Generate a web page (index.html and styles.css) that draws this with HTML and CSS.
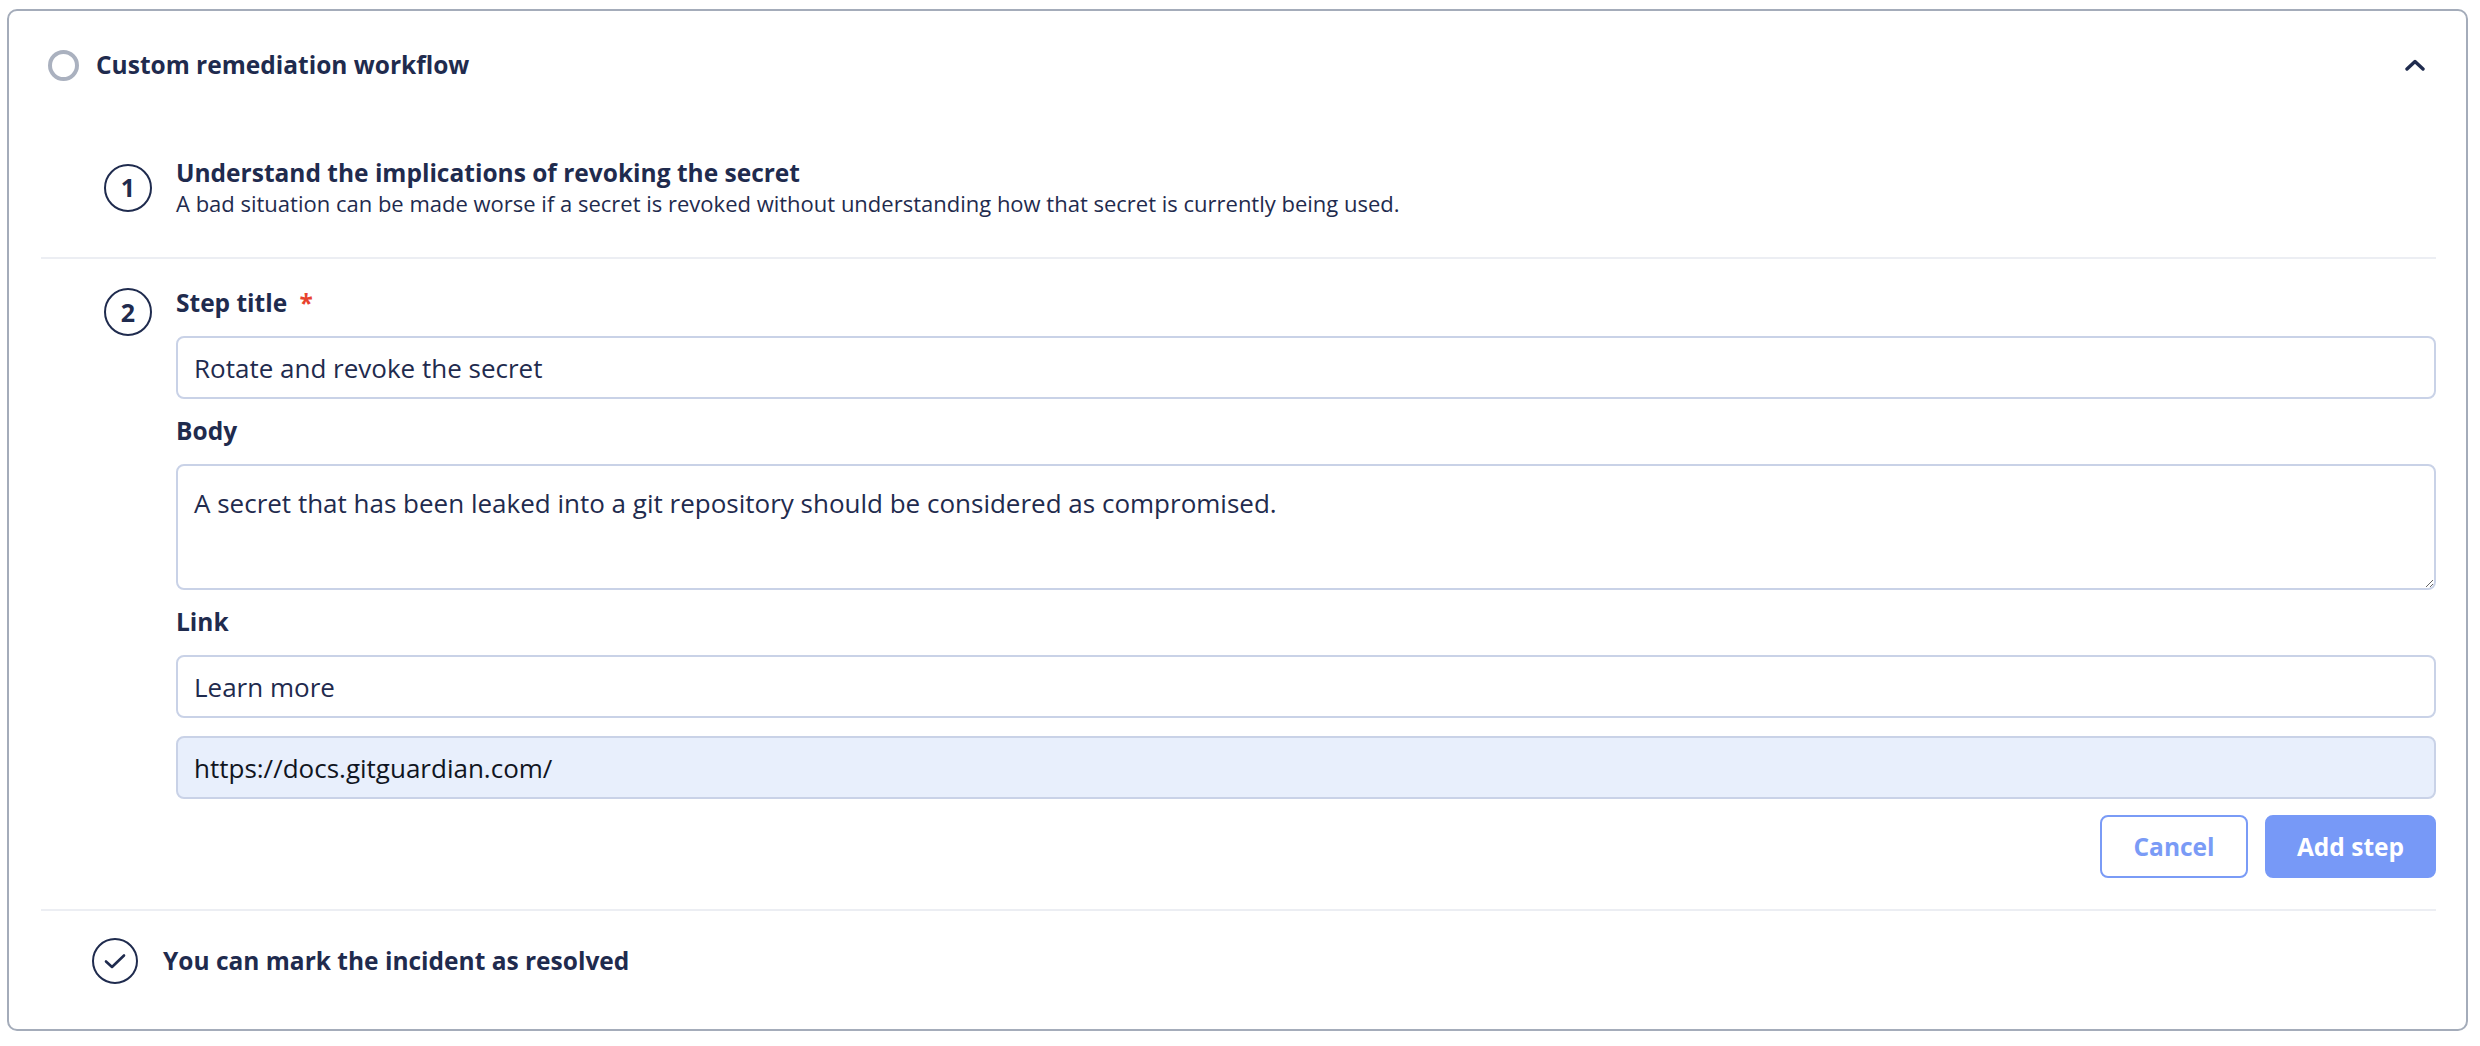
FILE: index.html
```html
<!DOCTYPE html>
<html lang="en">
<head>
<meta charset="utf-8">
<title>Custom remediation workflow</title>
<link rel="stylesheet" href="styles.css">
</head>
<body>
<section class="card">
  <header class="card-header">
    <span class="status-ring"></span>
    <h2 class="card-title">Custom remediation workflow</h2>
    <svg class="chevron" viewBox="0 0 20 12" width="20" height="12" aria-hidden="true">
      <path d="M2 10 L10 2.5 L18 10" fill="none" stroke="#1f2b4e" stroke-width="3.4" stroke-linecap="round" stroke-linejoin="round"/>
    </svg>
  </header>

  <div class="steps">
    <div class="step step-read">
      <div class="step-num">1</div>
      <div class="step-body">
        <div class="step-title">Understand the implications of revoking the secret</div>
        <div class="step-desc">A bad situation can be made worse if a secret is revoked without understanding how that secret is currently being used.</div>
      </div>
    </div>

    <div class="step step-edit">
      <div class="step-num">2</div>
      <form class="step-form">
        <label class="field-label first">Step title <span class="req">*</span></label>
        <input class="field" type="text" value="Rotate and revoke the secret">
        <label class="field-label">Body</label>
        <textarea class="field area">A secret that has been leaked into a git repository should be considered as compromised.</textarea>
        <label class="field-label">Link</label>
        <input class="field" type="text" value="Learn more">
        <input class="field url" type="text" value="https://docs.gitguardian.com/">
        <div class="actions">
          <button type="button" class="btn btn-outline">Cancel</button>
          <button type="button" class="btn btn-primary">Add step</button>
        </div>
      </form>
    </div>

    <div class="step-final">
      <span class="check-circle">
        <svg viewBox="0 0 24 24" width="24" height="24" aria-hidden="true">
          <path d="M3 12.5 L9 18 L21 6.5" fill="none" stroke="#1f2b4e" stroke-width="2.6" stroke-linecap="round" stroke-linejoin="round"/>
        </svg>
      </span>
      <span class="final-text">You can mark the incident as resolved</span>
    </div>
  </div>
</section>
</body>
</html>
```
FILE: styles.css
```css
* { box-sizing: border-box; }

html, body {
  margin: 0;
  padding: 0;
  background: #ffffff;
}

body {
  font-family: "Open Sans", "Noto Sans", sans-serif;
  color: #1f2b4e;
  padding: 9px 12px 0 7px;
}

.card {
  border: 2px solid #a4acba;
  border-radius: 10px;
  height: 1022px;
  background: #fff;
}

.card-header {
  display: flex;
  align-items: center;
  height: 56px;
  margin-top: 26px;
  padding: 0 41px 0 39px;
}

.status-ring {
  width: 31px;
  height: 31px;
  border-radius: 50%;
  border: 4px solid #aab1bf;
  flex: none;
}

.card-title {
  margin: 0 0 0 17px;
  font-size: 24.5px;
  font-weight: 700;
  line-height: 32px;
  flex: 1;
}

.chevron { flex: none; }

.steps {
  margin: 0 30px 0 32px;
}

.step {
  display: flex;
  padding-left: 63px;
}

.step-num {
  flex: none;
  width: 48px;
  height: 48px;
  border: 2.5px solid #1f2b4e;
  border-radius: 50%;
  display: flex;
  align-items: center;
  justify-content: center;
  font-size: 25px;
  font-weight: 700;
  line-height: 1;
  margin-right: 24px;
}

.step-read {
  align-items: center;
  padding-top: 64px;
  padding-bottom: 39px;
  border-bottom: 2px solid #eceef3;
}

.step-title {
  font-size: 24.5px;
  font-weight: 700;
  line-height: 31px;
}

.step-desc {
  font-size: 22px;
  line-height: 30px;
}

.step-edit {
  align-items: flex-start;
  padding-top: 28px;
  padding-bottom: 31px;
  border-bottom: 2px solid #eceef3;
}

.step-edit .step-num { margin-top: 1px; }

.step-form {
  flex: 1;
  display: flex;
  flex-direction: column;
  margin: 0;
}

.field-label {
  display: block;
  font-size: 24.5px;
  font-weight: 700;
  line-height: 32px;
  margin: 16px 0 17px;
}

.field-label.first { margin-top: 0; }

.req {
  color: #e8432e;
  margin-left: 6px;
}

.field {
  display: block;
  width: 100%;
  height: 63px;
  border: 2px solid #c9d2e7;
  border-radius: 8px;
  padding: 0 16px;
  font-family: "Open Sans", "Noto Sans", sans-serif;
  font-size: 26px;
  color: #1f2b4e;
  background: #fff;
  outline: none;
}

.field.area {
  height: 126px;
  padding: 19px 16px;
  line-height: 36px;
  resize: vertical;
}

.field.url {
  margin-top: 18px;
  background: #e8effc;
  color: #101522;
}

.actions {
  display: flex;
  justify-content: flex-end;
  gap: 17px;
  margin-top: 16px;
}

.btn {
  height: 63px;
  border-radius: 8px;
  font-family: "Open Sans", "Noto Sans", sans-serif;
  font-size: 24.5px;
  font-weight: 700;
  cursor: pointer;
}

.btn-outline {
  width: 148px;
  background: #fff;
  border: 2px solid #7a9bf6;
  color: #7a9bf6;
}

.btn-primary {
  width: 171px;
  background: #7799f7;
  border: 2px solid #7799f7;
  color: #fff;
}

.step-final {
  display: flex;
  align-items: center;
  padding: 27px 0 0 51px;
}

.check-circle {
  flex: none;
  width: 46px;
  height: 46px;
  border: 2.5px solid #1f2b4e;
  border-radius: 50%;
  display: flex;
  align-items: center;
  justify-content: center;
  margin-right: 25px;
}

.final-text {
  font-size: 24.5px;
  font-weight: 700;
  line-height: 32px;
}
```
